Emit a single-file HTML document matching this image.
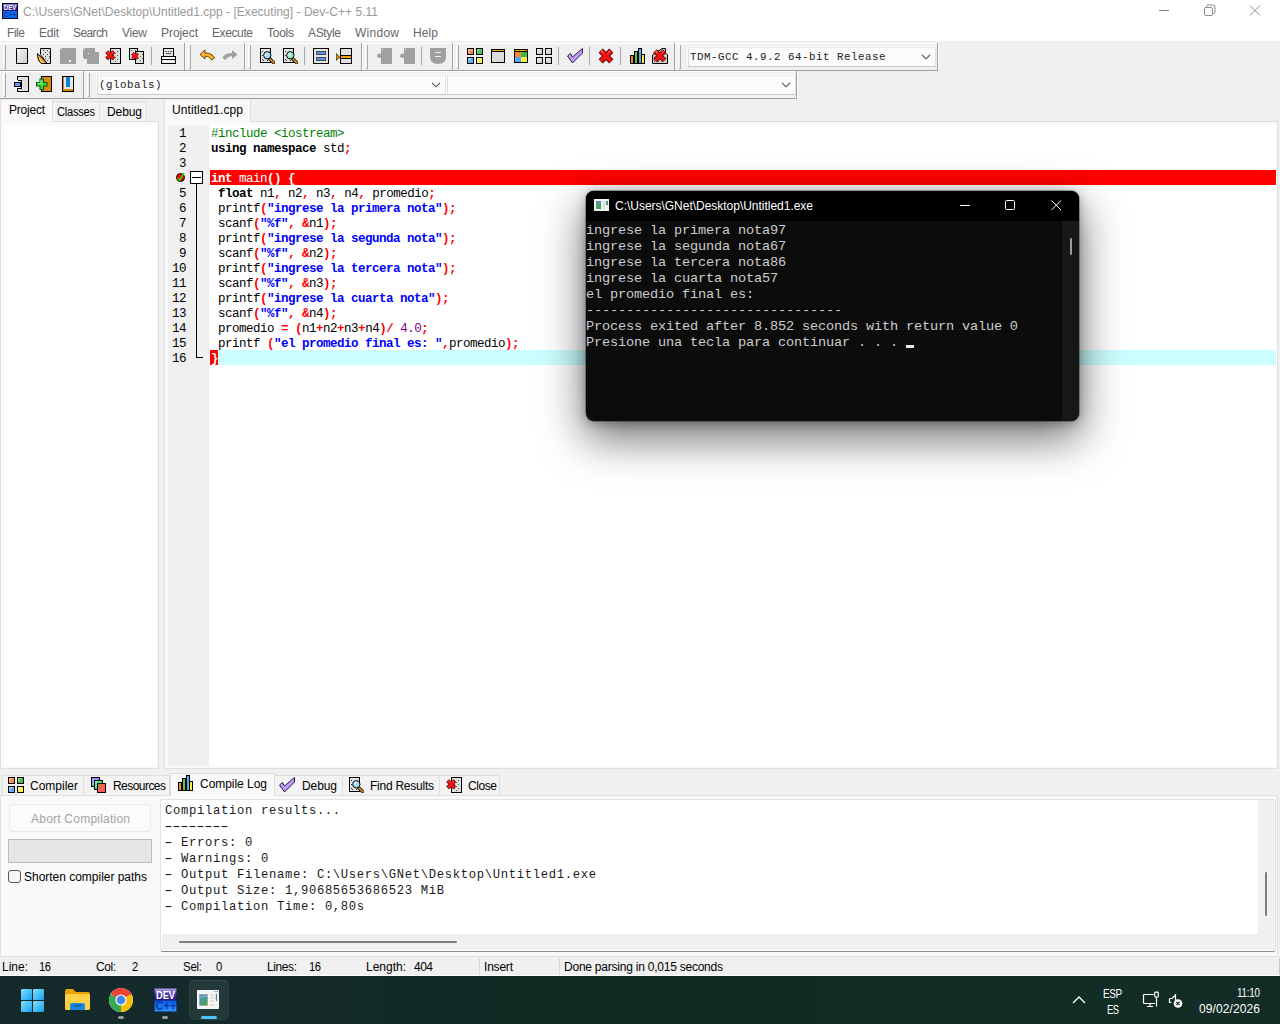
<!DOCTYPE html>
<html lang="es"><head><meta charset="utf-8"><title>Dev-C++</title>
<style>
html,body{margin:0;padding:0}
body{width:1280px;height:1024px;overflow:hidden;background:#f0f0f0;position:relative;font-family:"Liberation Sans",sans-serif}
body div,body svg,body span.t,body pre{position:absolute;box-sizing:border-box}
span.t{white-space:pre;display:block}
pre{margin:0;white-space:pre}
pre b{font-weight:700}
#log i{display:inline-block;font-style:normal;transform:scaleX(1.75)}
b.s{color:#0000ff}b.y{color:#ff0000}b.n{color:#800080;font-weight:400}b.p{color:#008000;font-weight:400}b.w{color:#fff}b.wn{color:#fff;font-weight:400}
</style></head>
<body>
<!-- title bar + menu -->
<div style="left:0px;top:0px;width:1280px;height:41px;background:#ffffff;"></div>
<svg style="left:2px;top:3px;" width="16" height="16" viewBox="0 0 16 16">
<defs><linearGradient id="gda" x1="0" y1="0" x2="0" y2="1"><stop offset="0" stop-color="#8a80d8"/><stop offset="0.500" stop-color="#3a2aa0"/><stop offset="1" stop-color="#1c1470"/></linearGradient></defs>
<rect x="0" y="0" width="16" height="16" fill="#08082c"/>
<rect x="1" y="1" width="14" height="7" fill="url(#gda)"/>
<rect x="1" y="8" width="14" height="7" fill="#0f6af2"/>
<text x="8" y="7.300" font-family="Liberation Sans, sans-serif" font-size="6.500" font-weight="700" fill="#fff" text-anchor="middle" textLength="12.500" lengthAdjust="spacingAndGlyphs">DEV</text>
<text x="8" y="14.300" font-family="Liberation Sans, sans-serif" font-size="8" font-weight="700" fill="#0a3a9c" text-anchor="middle" textLength="13" lengthAdjust="spacingAndGlyphs">C++</text>
</svg>
<span class="t" id="t1" style="left:23px;top:4px;font:400 12px/16px 'Liberation Sans', sans-serif;color:#999999;letter-spacing:0.028px;">C:\Users\GNet\Desktop\Untitled1.cpp - [Executing] - Dev-C++ 5.11</span>
<svg style="left:1140px;top:0px;" width="140" height="24" viewBox="0 0 140 24">
<g fill="none" stroke="#8a8a8a" stroke-width="1">
<path d="M19 10.5h10"/>
<rect x="64.5" y="7.5" width="8" height="8" rx="1.5"/>
<path d="M66.5 7.5v-1a1.5 1.5 0 0 1 1.5 -1.5h5a2 2 0 0 1 2 2v5a1.500 1.500 0 0 1 -1.500 1.500h-1"/>
<path d="M110 5.500l10 10M120 5.500l-10 10"/>
</g></svg>
<span class="t" id="t2" style="left:7px;top:25px;font:400 12px/16px 'Liberation Sans', sans-serif;color:#666666;letter-spacing:-0.448px;">File</span>
<span class="t" id="t3" style="left:39px;top:25px;font:400 12px/16px 'Liberation Sans', sans-serif;color:#666666;letter-spacing:-0.229px;">Edit</span>
<span class="t" id="t4" style="left:73px;top:25px;font:400 12px/16px 'Liberation Sans', sans-serif;color:#666666;letter-spacing:-0.606px;">Search</span>
<span class="t" id="t5" style="left:122px;top:25px;font:400 12px/16px 'Liberation Sans', sans-serif;color:#666666;letter-spacing:-0.266px;">View</span>
<span class="t" id="t6" style="left:161px;top:25px;font:400 12px/16px 'Liberation Sans', sans-serif;color:#666666;letter-spacing:-0.060px;">Project</span>
<span class="t" id="t7" style="left:212px;top:25px;font:400 12px/16px 'Liberation Sans', sans-serif;color:#666666;letter-spacing:-0.393px;">Execute</span>
<span class="t" id="t8" style="left:267px;top:25px;font:400 12px/16px 'Liberation Sans', sans-serif;color:#666666;letter-spacing:-0.254px;">Tools</span>
<span class="t" id="t9" style="left:308px;top:25px;font:400 12px/16px 'Liberation Sans', sans-serif;color:#666666;letter-spacing:-0.338px;">AStyle</span>
<span class="t" id="t10" style="left:355px;top:25px;font:400 12px/16px 'Liberation Sans', sans-serif;color:#666666;letter-spacing:0.263px;">Window</span>
<span class="t" id="t11" style="left:413px;top:25px;font:400 12px/16px 'Liberation Sans', sans-serif;color:#666666;letter-spacing:0.104px;">Help</span>
<!-- toolbars -->
<div style="left:0px;top:43px;width:938px;height:1px;background:#ffffff;"></div>
<div style="left:0px;top:70px;width:938px;height:1px;background:#a0a0a0;"></div>
<div style="left:0px;top:98px;width:797px;height:1px;background:#a0a0a0;"></div>
<div style="left:0px;top:71px;width:797px;height:1px;background:#ffffff;"></div>
<div style="left:5px;top:45px;width:1px;height:24px;background:#a8a8a8;"></div>
<div style="left:4px;top:68px;width:1px;height:1px;background:#a8a8a8;"></div>
<div style="left:3px;top:45px;width:1px;height:23px;background:#ffffff;"></div>
<div style="left:190px;top:45px;width:1px;height:24px;background:#a8a8a8;"></div>
<div style="left:189px;top:68px;width:1px;height:1px;background:#a8a8a8;"></div>
<div style="left:188px;top:45px;width:1px;height:23px;background:#ffffff;"></div>
<div style="left:250px;top:45px;width:1px;height:24px;background:#a8a8a8;"></div>
<div style="left:249px;top:68px;width:1px;height:1px;background:#a8a8a8;"></div>
<div style="left:248px;top:45px;width:1px;height:23px;background:#ffffff;"></div>
<div style="left:367px;top:45px;width:1px;height:24px;background:#a8a8a8;"></div>
<div style="left:366px;top:68px;width:1px;height:1px;background:#a8a8a8;"></div>
<div style="left:365px;top:45px;width:1px;height:23px;background:#ffffff;"></div>
<div style="left:458px;top:45px;width:1px;height:24px;background:#a8a8a8;"></div>
<div style="left:457px;top:68px;width:1px;height:1px;background:#a8a8a8;"></div>
<div style="left:456px;top:45px;width:1px;height:23px;background:#ffffff;"></div>
<div style="left:680px;top:45px;width:1px;height:24px;background:#a8a8a8;"></div>
<div style="left:679px;top:68px;width:1px;height:1px;background:#a8a8a8;"></div>
<div style="left:678px;top:45px;width:1px;height:23px;background:#ffffff;"></div>
<div style="left:184px;top:43px;width:1px;height:27px;background:#a0a0a0;"></div>
<div style="left:185px;top:43px;width:1px;height:27px;background:#fbfbfb;"></div>
<div style="left:244px;top:43px;width:1px;height:27px;background:#a0a0a0;"></div>
<div style="left:245px;top:43px;width:1px;height:27px;background:#fbfbfb;"></div>
<div style="left:361px;top:43px;width:1px;height:27px;background:#a0a0a0;"></div>
<div style="left:362px;top:43px;width:1px;height:27px;background:#fbfbfb;"></div>
<div style="left:452px;top:43px;width:1px;height:27px;background:#a0a0a0;"></div>
<div style="left:453px;top:43px;width:1px;height:27px;background:#fbfbfb;"></div>
<div style="left:674px;top:43px;width:1px;height:27px;background:#a0a0a0;"></div>
<div style="left:675px;top:43px;width:1px;height:27px;background:#fbfbfb;"></div>
<div style="left:937px;top:43px;width:1px;height:27px;background:#a0a0a0;"></div>
<div style="left:938px;top:43px;width:1px;height:27px;background:#fbfbfb;"></div>
<div style="left:151px;top:47px;width:1px;height:18px;background:#a8a8a8;"></div>
<div style="left:304px;top:47px;width:1px;height:18px;background:#a8a8a8;"></div>
<div style="left:421px;top:47px;width:1px;height:18px;background:#a8a8a8;"></div>
<div style="left:558px;top:47px;width:1px;height:18px;background:#a8a8a8;"></div>
<div style="left:589px;top:47px;width:1px;height:18px;background:#a8a8a8;"></div>
<div style="left:620px;top:47px;width:1px;height:18px;background:#a8a8a8;"></div>
<div style="left:5px;top:73px;width:1px;height:24px;background:#a8a8a8;"></div>
<div style="left:4px;top:96px;width:1px;height:1px;background:#a8a8a8;"></div>
<div style="left:3px;top:73px;width:1px;height:23px;background:#ffffff;"></div>
<div style="left:89px;top:73px;width:1px;height:24px;background:#a8a8a8;"></div>
<div style="left:88px;top:96px;width:1px;height:1px;background:#a8a8a8;"></div>
<div style="left:87px;top:73px;width:1px;height:23px;background:#ffffff;"></div>
<div style="left:83px;top:71px;width:1px;height:27px;background:#a0a0a0;"></div>
<div style="left:84px;top:71px;width:1px;height:27px;background:#fbfbfb;"></div>
<div style="left:796px;top:71px;width:1px;height:27px;background:#a0a0a0;"></div>
<div style="left:797px;top:71px;width:1px;height:27px;background:#fbfbfb;"></div>
<svg style="left:13px;top:48px;shape-rendering:crispEdges;" width="16" height="16" viewBox="0 0 16 16"><defs><linearGradient id="gnew" x1="0" y1="0" x2="1" y2="1"><stop offset="0" stop-color="#f2f2f2"/><stop offset="1" stop-color="#cfcfcf"/></linearGradient></defs><rect x="3.500" y="0.500" width="11" height="15" fill="url(#gnew)" stroke="#000"/></svg>
<svg style="left:36px;top:48px;shape-rendering:crispEdges;" width="16" height="16" viewBox="0 0 16 16"><g shape-rendering="geometricPrecision"><path d="M4.500 0.500H14.500V15.500H11L4.500 6.500Z" fill="#e0e0e0" stroke="#000"/></g><rect x="7" y="2" width="1" height="1" fill="#444"/><rect x="11" y="2" width="1" height="1" fill="#444"/><rect x="9" y="4" width="1" height="1" fill="#444"/><rect x="13" y="4" width="1" height="1" fill="#444"/><rect x="7" y="6" width="1" height="1" fill="#444"/><rect x="11" y="6" width="1" height="1" fill="#444"/><rect x="9" y="8" width="1" height="1" fill="#444"/><rect x="13" y="8" width="1" height="1" fill="#444"/><rect x="9" y="10" width="1" height="1" fill="#444"/><rect x="13" y="10" width="1" height="1" fill="#444"/><rect x="11" y="12" width="1" height="1" fill="#444"/><path d="M1.500 5.500L11 15.500H5.500Q1.500 13 1.500 5.500Z" fill="#ffb43c" stroke="#000" stroke-width="1" stroke-linejoin="round" shape-rendering="geometricPrecision"/></svg>
<svg style="left:60px;top:48px;shape-rendering:crispEdges;" width="16" height="16" viewBox="0 0 16 16"><rect x="0" y="0" width="16" height="16" fill="#a0a0a0"/><rect x="0" y="0" width="1" height="1" fill="#f0f0f0"/><rect x="1" y="1" width="1" height="1" fill="#e8e8e8"/><rect x="9" y="12" width="2" height="2" fill="#f4f4f4"/></svg>
<svg style="left:83px;top:48px;shape-rendering:crispEdges;" width="16" height="16" viewBox="0 0 16 16"><rect x="0" y="0" width="12" height="11" fill="#a0a0a0"/><rect x="4" y="4" width="12" height="12" fill="#a0a0a0"/><rect x="0" y="0" width="1" height="1" fill="#f0f0f0"/><rect x="1" y="1" width="1" height="1" fill="#e8e8e8"/><rect x="5" y="5" width="1" height="1" fill="#f4f4f4"/><rect x="0" y="10" width="1" height="1" fill="#f0f0f0"/></svg>
<svg style="left:105px;top:48px;shape-rendering:crispEdges;" width="16" height="16" viewBox="0 0 16 16"><rect x="5.5" y="0.5" width="10" height="15" fill="#e0e0e0" stroke="#000" stroke-width="1"/><rect x="8" y="3" width="1" height="1" fill="#555"/><rect x="12" y="3" width="1" height="1" fill="#555"/><rect x="10" y="5" width="1" height="1" fill="#555"/><rect x="8" y="7" width="1" height="1" fill="#555"/><rect x="12" y="7" width="1" height="1" fill="#555"/><rect x="10" y="9" width="1" height="1" fill="#555"/><rect x="8" y="11" width="1" height="1" fill="#555"/><rect x="12" y="11" width="1" height="1" fill="#555"/><rect x="10" y="13" width="1" height="1" fill="#555"/><g transform="translate(0.5,2.5) scale(0.95)" shape-rendering="geometricPrecision" stroke-linecap="butt"><path d="M1.200 1.200L8.800 8.800M8.800 1.200L1.200 8.800" stroke="#6a0000" stroke-width="4.200"/><path d="M1.500 1.500L8.500 8.500M8.500 1.500L1.500 8.500" stroke="#f41414" stroke-width="2.800"/><path d="M1.800 1.200L3 2.400M7.600 1.600L6.800 2.400" stroke="#ff8a8a" stroke-width="0.900"/></g></svg>
<svg style="left:128px;top:48px;shape-rendering:crispEdges;" width="16" height="16" viewBox="0 0 16 16"><rect x="1.5" y="0.5" width="8" height="11" fill="#e0e0e0" stroke="#000" stroke-width="1"/><rect x="3" y="2" width="1" height="1" fill="#555"/><rect x="7" y="2" width="1" height="1" fill="#555"/><rect x="5" y="4" width="1" height="1" fill="#555"/><rect x="3" y="6" width="1" height="1" fill="#555"/><rect x="7" y="6" width="1" height="1" fill="#555"/><rect x="5" y="8" width="1" height="1" fill="#555"/><rect x="7.5" y="3.5" width="8" height="12" fill="#e0e0e0" stroke="#000" stroke-width="1"/><rect x="10" y="6" width="1" height="1" fill="#555"/><rect x="14" y="6" width="1" height="1" fill="#555"/><rect x="12" y="8" width="1" height="1" fill="#555"/><rect x="10" y="10" width="1" height="1" fill="#555"/><rect x="14" y="10" width="1" height="1" fill="#555"/><rect x="12" y="12" width="1" height="1" fill="#555"/><g transform="translate(3.5,4.5) scale(0.7)" shape-rendering="geometricPrecision" stroke-linecap="butt"><path d="M1.200 1.200L8.800 8.800M8.800 1.200L1.200 8.800" stroke="#6a0000" stroke-width="4.200"/><path d="M1.500 1.500L8.500 8.500M8.500 1.500L1.500 8.500" stroke="#f41414" stroke-width="2.800"/><path d="M1.800 1.200L3 2.400M7.600 1.600L6.800 2.400" stroke="#ff8a8a" stroke-width="0.900"/></g></svg>
<svg style="left:160px;top:48px;shape-rendering:crispEdges;" width="16" height="16" viewBox="0 0 16 16"><rect x="3.500" y="0.500" width="10" height="8" fill="#e4e4e4" stroke="#000"/><rect x="5" y="3" width="2" height="1" fill="#555"/><rect x="8" y="3" width="1" height="1" fill="#555"/><rect x="10" y="3" width="2" height="1" fill="#555"/><rect x="6" y="5" width="5" height="1" fill="#555"/><rect x="1.500" y="8.500" width="14" height="3" fill="#fff" stroke="#000"/><rect x="1.500" y="11.500" width="14" height="4" rx="1" fill="#e8e8e8" stroke="#000"/><rect x="3" y="13" width="11" height="1" fill="#fff"/></svg>
<svg style="left:199px;top:48px;shape-rendering:crispEdges;" width="16" height="16" viewBox="0 0 16 16"><path d="M6 2L1 6.500L6 11V8.200C9 8 11 9.500 12.500 12L15.500 10C14 6.500 10.500 4.800 6 5Z" fill="#ffb428" stroke="#5a3800" stroke-width="0.9" shape-rendering="geometricPrecision" stroke-linejoin="round"/></svg>
<svg style="left:222px;top:48px;shape-rendering:crispEdges;" width="16" height="16" viewBox="0 0 16 16"><path d="M10 2L15.500 6.500L10 11V8.200C7 8 5 9.500 3.500 12L0.500 10C2 6.500 5.500 4.800 10 5Z" fill="#a0a0a0" shape-rendering="geometricPrecision"/></svg>
<svg style="left:259px;top:48px;shape-rendering:crispEdges;" width="16" height="16" viewBox="0 0 16 16"><rect x="1.5" y="0.5" width="10" height="14" fill="#e4e4e4" stroke="#000" stroke-width="1"/><rect x="3" y="3" width="1" height="1" fill="#333"/><rect x="3" y="7" width="1" height="1" fill="#333"/><rect x="3" y="11" width="1" height="1" fill="#333"/><rect x="4" y="12" width="1" height="1" fill="#333"/><rect x="8" y="12" width="1" height="1" fill="#333"/><g shape-rendering="geometricPrecision"><path d="M10.500 10.500L15 15" stroke="#000" stroke-width="3.200" stroke-linecap="round"/><path d="M10.500 10.500L15 15" stroke="#f0a020" stroke-width="1.600" stroke-linecap="round"/><circle cx="8.300" cy="7.300" r="3.700" fill="#9adcf4" stroke="#000" stroke-width="1"/><circle cx="7.300" cy="6.300" r="1.500" fill="#fff" opacity=".55"/></g></svg>
<svg style="left:282px;top:48px;shape-rendering:crispEdges;" width="16" height="16" viewBox="0 0 16 16"><rect x="1.5" y="0.5" width="10" height="14" fill="#e4e4e4" stroke="#000" stroke-width="1"/><rect x="3" y="3" width="1" height="1" fill="#333"/><rect x="3" y="7" width="1" height="1" fill="#333"/><rect x="3" y="11" width="1" height="1" fill="#333"/><rect x="4" y="12" width="1" height="1" fill="#333"/><rect x="8" y="12" width="1" height="1" fill="#333"/><g shape-rendering="geometricPrecision"><path d="M10.500 10.500L15 15" stroke="#000" stroke-width="3.200" stroke-linecap="round"/><path d="M10.500 10.500L15 15" stroke="#f0a020" stroke-width="1.600" stroke-linecap="round"/><circle cx="8.300" cy="7.300" r="3.700" fill="#9aeac0" stroke="#000" stroke-width="1"/><circle cx="7.300" cy="6.300" r="1.500" fill="#fff" opacity=".55"/></g></svg>
<svg style="left:313px;top:48px;shape-rendering:crispEdges;" width="16" height="16" viewBox="0 0 16 16"><rect x="0.500" y="0.500" width="15" height="15" fill="#e4e4e4" stroke="#000"/><rect x="3.500" y="3.500" width="9" height="3" fill="#4f8ff7" stroke="#4a4a4a"/><rect x="3.500" y="9.500" width="9" height="3" fill="#4f8ff7" stroke="#4a4a4a"/></svg>
<svg style="left:336px;top:48px;shape-rendering:crispEdges;" width="16" height="16" viewBox="0 0 16 16"><rect x="4.500" y="0.500" width="11" height="15" fill="#e0e0e0" stroke="#000"/><rect x="5" y="7" width="10" height="1" fill="#000"/><rect x="5" y="8" width="10" height="2" fill="#f5a000"/><rect x="5" y="10" width="10" height="1" fill="#000"/><path d="M0 5.500L3.500 9L0 12.500Z" fill="#f5a000" stroke="#000" stroke-width="0.8" shape-rendering="geometricPrecision"/></svg>
<svg style="left:376px;top:48px;shape-rendering:crispEdges;" width="16" height="16" viewBox="0 0 16 16"><path d="M5 0H16V16H5V10L2 9.500Q0 8 2 6L5 5.500Z" fill="#a0a0a0" shape-rendering="geometricPrecision"/><rect x="6" y="1" width="1" height="1" fill="#f0f0f0"/></svg>
<svg style="left:399px;top:48px;shape-rendering:crispEdges;" width="16" height="16" viewBox="0 0 16 16"><path d="M5 0H16V16H5V10L2 9.500Q0 8 2 6L5 5.500Z" fill="#a0a0a0" shape-rendering="geometricPrecision"/><rect x="6" y="1" width="1" height="1" fill="#f0f0f0"/></svg>
<svg style="left:430px;top:48px;shape-rendering:crispEdges;" width="16" height="16" viewBox="0 0 16 16"><path d="M0 0H16V9Q16 16 8 16Q0 16 0 9Z" fill="#a0a0a0" shape-rendering="geometricPrecision"/><rect x="5" y="4" width="6" height="1" fill="#f0f0f0"/><rect x="5" y="8" width="6" height="1" fill="#f0f0f0"/></svg>
<svg style="left:467px;top:48px;shape-rendering:crispEdges;" width="16" height="16" viewBox="0 0 16 16"><defs><linearGradient id="q19" x1="0" y1="0" x2="1" y2="1"><stop offset="0" stop-color="#fff" stop-opacity="0.550"/><stop offset="0.600" stop-color="#fff" stop-opacity="0"/></linearGradient></defs><rect x="0.5" y="0.5" width="6" height="6" fill="#fa8a44" stroke="#000"/><rect x="1" y="1" width="5" height="5" fill="url(#q19)"/><rect x="9.5" y="0.5" width="6" height="6" fill="#48c048" stroke="#000"/><rect x="10" y="1" width="5" height="5" fill="url(#q19)"/><rect x="0.5" y="9.5" width="6" height="6" fill="#60acf8" stroke="#000"/><rect x="1" y="10" width="5" height="5" fill="url(#q19)"/><rect x="9.5" y="9.5" width="6" height="6" fill="#f8f248" stroke="#000"/><rect x="10" y="10" width="5" height="5" fill="url(#q19)"/></svg>
<svg style="left:490px;top:48px;shape-rendering:crispEdges;" width="16" height="16" viewBox="0 0 16 16"><rect x="1.500" y="1.500" width="13" height="13" fill="#dcdcdc" stroke="#000"/><rect x="2" y="2" width="12" height="1" fill="#f5a000"/><rect x="2" y="3" width="12" height="1" fill="#000"/></svg>
<svg style="left:513px;top:48px;shape-rendering:crispEdges;" width="16" height="16" viewBox="0 0 16 16"><rect x="1.500" y="1.500" width="13" height="13" fill="#dcdcdc" stroke="#000"/><rect x="2" y="2" width="12" height="1" fill="#f5a000"/><rect x="2" y="3" width="12" height="1" fill="#000"/><rect x="2" y="4" width="6" height="5" fill="#f98538"/><rect x="8" y="4" width="6" height="5" fill="#3cb83c"/><rect x="2" y="9" width="6" height="5" fill="#58a8f8"/><rect x="8" y="9" width="6" height="5" fill="#f6f03c"/></svg>
<svg style="left:536px;top:48px;shape-rendering:crispEdges;" width="16" height="16" viewBox="0 0 16 16"><defs><linearGradient id="q22" x1="0" y1="0" x2="1" y2="1"><stop offset="0" stop-color="#fff" stop-opacity="0.550"/><stop offset="0.600" stop-color="#fff" stop-opacity="0"/></linearGradient></defs><rect x="0.5" y="0.5" width="6" height="6" fill="#d8d8d8" stroke="#000"/><rect x="1" y="1" width="5" height="5" fill="url(#q22)"/><rect x="9.5" y="0.5" width="6" height="6" fill="#d8d8d8" stroke="#000"/><rect x="10" y="1" width="5" height="5" fill="url(#q22)"/><rect x="0.5" y="9.5" width="6" height="6" fill="#d8d8d8" stroke="#000"/><rect x="1" y="10" width="5" height="5" fill="url(#q22)"/><rect x="9.5" y="9.5" width="6" height="6" fill="#d8d8d8" stroke="#000"/><rect x="10" y="10" width="5" height="5" fill="url(#q22)"/></svg>
<svg style="left:567px;top:48px;shape-rendering:crispEdges;" width="16" height="16" viewBox="0 0 16 16"><path d="M0.500 8L5.500 15L15.500 5V0.500L5.500 9L3.500 5.500Z" fill="#c39cf6" stroke="#2a1a50" stroke-width="1" stroke-linejoin="round" shape-rendering="geometricPrecision"/></svg>
<svg style="left:598px;top:48px;shape-rendering:crispEdges;" width="16" height="16" viewBox="0 0 16 16"><g transform="translate(1,1) scale(1.4)" shape-rendering="geometricPrecision" stroke-linecap="butt"><path d="M1.200 1.200L8.800 8.800M8.800 1.200L1.200 8.800" stroke="#6a0000" stroke-width="4.200"/><path d="M1.500 1.500L8.500 8.500M8.500 1.500L1.500 8.500" stroke="#f41414" stroke-width="2.800"/><path d="M1.800 1.200L3 2.400M7.600 1.600L6.800 2.400" stroke="#ff8a8a" stroke-width="0.900"/></g></svg>
<svg style="left:629px;top:48px;shape-rendering:crispEdges;" width="16" height="16" viewBox="0 0 16 16"><rect x="1.500" y="7.500" width="3" height="8" fill="#f98538" stroke="#000"/><rect x="5.500" y="3.500" width="3" height="12" fill="#58c83c" stroke="#000"/><rect x="9.500" y="0.500" width="3" height="15" fill="#58a8f8" stroke="#000"/><rect x="12.500" y="6.500" width="3" height="9" fill="#f6f03c" stroke="#000"/></svg>
<svg style="left:652px;top:48px;shape-rendering:crispEdges;" width="16" height="16" viewBox="0 0 16 16"><path d="M0.500 15.500V7L10 0.500H13.500V5L15.500 7V15.500Z" fill="#d0d0d0" stroke="#000" shape-rendering="geometricPrecision"/><rect x="2" y="9" width="1" height="1" fill="#333"/><rect x="6" y="9" width="1" height="1" fill="#333"/><rect x="10" y="9" width="1" height="1" fill="#333"/><rect x="4" y="11" width="1" height="1" fill="#333"/><rect x="8" y="11" width="1" height="1" fill="#333"/><rect x="12" y="11" width="1" height="1" fill="#333"/><rect x="2" y="13" width="1" height="1" fill="#333"/><rect x="6" y="13" width="1" height="1" fill="#333"/><rect x="10" y="13" width="1" height="1" fill="#333"/><g transform="translate(1.5,1.5) scale(1.25)" shape-rendering="geometricPrecision" stroke-linecap="butt"><path d="M1.200 1.200L8.800 8.800M8.800 1.200L1.200 8.800" stroke="#6a0000" stroke-width="4.200"/><path d="M1.500 1.500L8.500 8.500M8.500 1.500L1.500 8.500" stroke="#f41414" stroke-width="2.800"/><path d="M1.800 1.200L3 2.400M7.600 1.600L6.800 2.400" stroke="#ff8a8a" stroke-width="0.900"/></g></svg>
<svg style="left:13px;top:76px;shape-rendering:crispEdges;" width="16" height="16" viewBox="0 0 16 16"><rect x="4.500" y="0.500" width="11" height="15" fill="#e0e0e0" stroke="#000"/><rect x="4" y="4" width="5" height="8" fill="#f0f0f0"/><rect x="8" y="3.500" width="1" height="9" fill="#000"/><rect x="5" y="3.500" width="3" height="1" fill="#000"/><rect x="5" y="11.500" width="3" height="1" fill="#000"/><rect x="1.500" y="6.500" width="6" height="4" fill="#5f9df7" stroke="#000"/></svg>
<svg style="left:36px;top:76px;shape-rendering:crispEdges;" width="16" height="16" viewBox="0 0 16 16"><rect x="5.500" y="0.500" width="10" height="15" fill="#d88a10" stroke="#000"/><g shape-rendering="geometricPrecision"><path d="M4 3H7.500V6.500H11V10H7.500V13.500H4V10H0.500V6.500H4Z" fill="#3fe03f" stroke="#0a5a0a" stroke-width="1.100" stroke-linejoin="round"/><path d="M5 4.200V7.500H1.800" fill="none" stroke="#b8ffb8" stroke-width="0.900"/></g></svg>
<svg style="left:59px;top:76px;shape-rendering:crispEdges;" width="16" height="16" viewBox="0 0 16 16"><rect x="3.500" y="0.500" width="11" height="15" fill="#d88a10" stroke="#000"/><rect x="4.500" y="1" width="9" height="12" fill="#e8e8e8"/><rect x="7" y="1" width="4" height="10" fill="#1080d0"/></svg>
<div style="left:687px;top:46px;width:249px;height:21px;background:#fbfbfb;border:1px solid #fdfdfd;border-right-color:#e2e2e2;border-bottom-color:#c6c9c6;box-shadow:inset 1px 0 0 #dedede,inset 0 1px 0 #ececec;"></div>
<svg style="left:921px;top:54px;" width="10" height="6" viewBox="0 0 10 6"><path d="M1 0.800l4 4l4 -4" fill="none" stroke="#505050" stroke-width="1.100"/></svg>
<span class="t" id="t12" style="left:690px;top:50px;font:400 10.8px/14px 'Liberation Mono', monospace;color:#222;letter-spacing:0.52px;">TDM-GCC 4.9.2 64-bit Release</span>
<div style="left:96px;top:74px;width:350px;height:21px;background:#fbfbfb;border:1px solid #fdfdfd;border-right-color:#e2e2e2;border-bottom-color:#c6c9c6;box-shadow:inset 1px 0 0 #dedede,inset 0 1px 0 #ececec;"></div>
<svg style="left:431px;top:82px;" width="10" height="6" viewBox="0 0 10 6"><path d="M1 0.800l4 4l4 -4" fill="none" stroke="#505050" stroke-width="1.100"/></svg>
<span class="t" id="t13" style="left:99px;top:78px;font:400 10.8px/14px 'Liberation Mono', monospace;color:#222;letter-spacing:0.52px;">(globals)</span>
<div style="left:446px;top:74px;width:350px;height:21px;background:#fbfbfb;border:1px solid #fdfdfd;border-right-color:#e2e2e2;border-bottom-color:#c6c9c6;box-shadow:inset 1px 0 0 #dedede,inset 0 1px 0 #ececec;"></div>
<svg style="left:781px;top:82px;" width="10" height="6" viewBox="0 0 10 6"><path d="M1 0.800l4 4l4 -4" fill="none" stroke="#505050" stroke-width="1.100"/></svg>
<!-- left project browser -->
<div style="left:52px;top:101px;width:48px;height:21px;background:#f3f3f3;border:1px solid #dfdfdf;"></div>
<div style="left:99px;top:101px;width:48px;height:21px;background:#f3f3f3;border:1px solid #dfdfdf;"></div>
<div style="left:0px;top:121px;width:159px;height:648px;background:#f9f9f9;border:1px solid #dfdfdf;"></div>
<div style="left:0px;top:99px;width:53px;height:23px;background:#f9f9f9;border:1px solid #ececec;border-bottom:none;border-right-color:#dfdfdf;border-left-color:#dfdfdf;"></div>
<div style="left:4px;top:125px;width:153px;height:641px;background:#ffffff;"></div>
<span class="t" id="t14" style="left:9px;top:102px;font:400 12px/16px 'Liberation Sans', sans-serif;color:#000;letter-spacing:-0.227px;">Project</span>
<span class="t" id="t15" style="left:57px;top:104px;font:400 12px/16px 'Liberation Sans', sans-serif;color:#000;letter-spacing:-0.285px;transform:scaleX(0.9273);transform-origin:left center;">Classes</span>
<span class="t" id="t16" style="left:107px;top:104px;font:400 12px/16px 'Liberation Sans', sans-serif;color:#000;letter-spacing:-0.094px;">Debug</span>
<!-- editor -->
<div style="left:164px;top:121px;width:1114px;height:648px;background:#f9f9f9;border:1px solid #dfdfdf;"></div>
<div style="left:164px;top:99px;width:87px;height:23px;background:#f9f9f9;border:1px solid #ececec;border-bottom:none;border-left-color:#dfdfdf;border-right-color:#dfdfdf;"></div>
<span class="t" id="t17" style="left:172px;top:102px;font:400 12px/16px 'Liberation Sans', sans-serif;color:#000;letter-spacing:0.079px;">Untitled1.cpp</span>
<div style="left:168px;top:125px;width:1109px;height:641px;background:#ffffff;"></div>
<div style="left:168px;top:125px;width:41px;height:641px;background:#f0f0f0;"></div>
<div style="left:210px;top:170px;width:1066px;height:15px;background:#ff0000;"></div>
<div style="left:210px;top:350px;width:1066px;height:15px;background:#ccffff;"></div>
<div style="left:210px;top:350px;width:8px;height:15px;background:#ff0000;"></div>
<div style="left:190px;top:171px;width:13px;height:13px;background:#ffffff;border:1px solid #000;"></div>
<div style="left:192px;top:177px;width:9px;height:1px;background:#000;"></div>
<div style="left:196px;top:184px;width:1px;height:174px;background:#000;"></div>
<div style="left:196px;top:357px;width:7px;height:1px;background:#000;"></div>
<svg style="left:176px;top:172px;" width="10" height="11" viewBox="0 0 10 11"><circle cx="4.500" cy="5.500" r="4" fill="#ff0000" stroke="#000" stroke-width="1"/><path d="M1.500 6.300L3.500 8.300L8 1.200" fill="none" stroke="#00ee00" stroke-width="1.500"/></svg>
<pre id="code" style="left:211px;top:127px;font:12.5px/15px 'Liberation Mono', monospace;letter-spacing:-0.5px;color:#000;"><b class="p">#include &lt;iostream&gt;</b>
<b class="k">using namespace</b> std<b class="y">;</b>

<b class="w">int</b><b class="wn"> main</b><b class="w">() {</b>
 <b class="k">float</b> n1<b class="y">,</b> n2<b class="y">,</b> n3<b class="y">,</b> n4<b class="y">,</b> promedio<b class="y">;</b>
 printf<b class="y">(</b><b class="s">&quot;ingrese la primera nota&quot;</b><b class="y">);</b>
 scanf<b class="y">(</b><b class="s">&quot;%f&quot;</b><b class="y">, &amp;</b>n1<b class="y">);</b>
 printf<b class="y">(</b><b class="s">&quot;ingrese la segunda nota&quot;</b><b class="y">);</b>
 scanf<b class="y">(</b><b class="s">&quot;%f&quot;</b><b class="y">, &amp;</b>n2<b class="y">);</b>
 printf<b class="y">(</b><b class="s">&quot;ingrese la tercera nota&quot;</b><b class="y">);</b>
 scanf<b class="y">(</b><b class="s">&quot;%f&quot;</b><b class="y">, &amp;</b>n3<b class="y">);</b>
 printf<b class="y">(</b><b class="s">&quot;ingrese la cuarta nota&quot;</b><b class="y">);</b>
 scanf<b class="y">(</b><b class="s">&quot;%f&quot;</b><b class="y">, &amp;</b>n4<b class="y">);</b>
 promedio <b class="y">= (</b>n1<b class="y">+</b>n2<b class="y">+</b>n3<b class="y">+</b>n4<b class="y">)/</b> <b class="n">4.0</b><b class="y">;</b>
 printf <b class="y">(</b><b class="s">&quot;el promedio final es: &quot;</b><b class="y">,</b>promedio<b class="y">);</b>
<b class="w">}</b></pre>
<pre id="lnum" style="left:168px;top:127px;width:18px;text-align:right;font:12.5px/15px 'Liberation Mono', monospace;letter-spacing:-0.5px;color:#000;">1
2
3
 
5
6
7
8
9
10
11
12
13
14
15
16</pre>
<!-- bottom message panel -->
<div style="left:2px;top:775px;width:82px;height:21px;background:#f3f3f3;border:1px solid #dfdfdf;border-bottom:none;"></div>
<div style="left:84px;top:775px;width:86px;height:21px;background:#f3f3f3;border:1px solid #dfdfdf;border-bottom:none;border-left:none;"></div>
<div style="left:275px;top:775px;width:68px;height:21px;background:#f3f3f3;border:1px solid #dfdfdf;border-bottom:none;border-left:none;"></div>
<div style="left:343px;top:775px;width:97px;height:21px;background:#f3f3f3;border:1px solid #dfdfdf;border-bottom:none;border-left:none;"></div>
<div style="left:440px;top:775px;width:60px;height:21px;background:#f3f3f3;border:1px solid #dfdfdf;border-bottom:none;border-left:none;"></div>
<div style="left:0px;top:795px;width:1278px;height:162px;background:#f9f9f9;border:1px solid #dfdfdf;"></div>
<div style="left:170px;top:773px;width:105px;height:23px;background:#f9f9f9;border:1px solid #dfdfdf;border-bottom:none;"></div>
<span class="t" id="t18" style="left:30px;top:778px;font:400 12px/16px 'Liberation Sans', sans-serif;color:#000;letter-spacing:-0.002px;">Compiler</span>
<span class="t" id="t19" style="left:113px;top:778px;font:400 12px/16px 'Liberation Sans', sans-serif;color:#000;letter-spacing:-0.545px;">Resources</span>
<span class="t" id="t20" style="left:200px;top:776px;font:400 12px/16px 'Liberation Sans', sans-serif;color:#000;letter-spacing:-0.037px;">Compile Log</span>
<span class="t" id="t21" style="left:302px;top:778px;font:400 12px/16px 'Liberation Sans', sans-serif;color:#000;letter-spacing:-0.094px;">Debug</span>
<span class="t" id="t22" style="left:370px;top:778px;font:400 12px/16px 'Liberation Sans', sans-serif;color:#000;letter-spacing:-0.246px;">Find Results</span>
<span class="t" id="t23" style="left:468px;top:778px;font:400 12px/16px 'Liberation Sans', sans-serif;color:#000;letter-spacing:-0.422px;">Close</span>
<svg style="left:8px;top:777px;shape-rendering:crispEdges;" width="16" height="16" viewBox="0 0 16 16"><defs><linearGradient id="q34" x1="0" y1="0" x2="1" y2="1"><stop offset="0" stop-color="#fff" stop-opacity="0.550"/><stop offset="0.600" stop-color="#fff" stop-opacity="0"/></linearGradient></defs><rect x="0.5" y="0.5" width="6" height="6" fill="#fa8a44" stroke="#000"/><rect x="1" y="1" width="5" height="5" fill="url(#q34)"/><rect x="9.5" y="0.5" width="6" height="6" fill="#48c048" stroke="#000"/><rect x="10" y="1" width="5" height="5" fill="url(#q34)"/><rect x="0.5" y="9.5" width="6" height="6" fill="#60acf8" stroke="#000"/><rect x="1" y="10" width="5" height="5" fill="url(#q34)"/><rect x="9.5" y="9.5" width="6" height="6" fill="#f8f248" stroke="#000"/><rect x="10" y="10" width="5" height="5" fill="url(#q34)"/></svg>
<svg style="left:91px;top:777px;shape-rendering:crispEdges;" width="15" height="16" viewBox="0 0 15 16"><rect x="0.500" y="0.500" width="8" height="9" fill="#8c8cff" stroke="#000"/><rect x="3.500" y="3.500" width="8" height="9" fill="#44e888" stroke="#000"/><rect x="6.500" y="6.500" width="8" height="9" fill="#ff5c5c" stroke="#000"/><rect x="7" y="7" width="4" height="5" fill="#d87038"/><rect x="4" y="4" width="2" height="3" fill="#8cf0b8" opacity="0.600"/><rect x="1" y="1" width="2" height="8" fill="#b0b0ff" opacity="0.600"/></svg>
<svg style="left:177px;top:775px;shape-rendering:crispEdges;" width="16" height="16" viewBox="0 0 16 16"><rect x="1.500" y="7.500" width="3" height="8" fill="#f98538" stroke="#000"/><rect x="5.500" y="3.500" width="3" height="12" fill="#58c83c" stroke="#000"/><rect x="9.500" y="0.500" width="3" height="15" fill="#58a8f8" stroke="#000"/><rect x="12.500" y="6.500" width="3" height="9" fill="#f6f03c" stroke="#000"/></svg>
<svg style="left:279px;top:777px;" width="16" height="16" viewBox="0 0 16 16"><path d="M0.500 8L5.500 15L15.500 5V0.500L5.500 9L3.500 5.500Z" fill="#c39cf6" stroke="#2a1a50" stroke-width="1" stroke-linejoin="round" shape-rendering="geometricPrecision"/></svg>
<svg style="left:348px;top:777px;shape-rendering:crispEdges;" width="16" height="16" viewBox="0 0 16 16"><rect x="1.5" y="0.5" width="10" height="14" fill="#e4e4e4" stroke="#000" stroke-width="1"/><rect x="3" y="3" width="1" height="1" fill="#333"/><rect x="3" y="7" width="1" height="1" fill="#333"/><rect x="3" y="11" width="1" height="1" fill="#333"/><rect x="4" y="12" width="1" height="1" fill="#333"/><rect x="8" y="12" width="1" height="1" fill="#333"/><g shape-rendering="geometricPrecision"><path d="M10.500 10.500L15 15" stroke="#000" stroke-width="3.200" stroke-linecap="round"/><path d="M10.500 10.500L15 15" stroke="#f0a020" stroke-width="1.600" stroke-linecap="round"/><circle cx="8.300" cy="7.300" r="3.700" fill="#9adcf4" stroke="#000" stroke-width="1"/><circle cx="7.300" cy="6.300" r="1.500" fill="#fff" opacity=".55"/></g></svg>
<svg style="left:446px;top:777px;shape-rendering:crispEdges;" width="16" height="16" viewBox="0 0 16 16"><rect x="5.5" y="0.5" width="10" height="15" fill="#e0e0e0" stroke="#000" stroke-width="1"/><rect x="8" y="3" width="1" height="1" fill="#555"/><rect x="12" y="3" width="1" height="1" fill="#555"/><rect x="10" y="5" width="1" height="1" fill="#555"/><rect x="8" y="7" width="1" height="1" fill="#555"/><rect x="12" y="7" width="1" height="1" fill="#555"/><rect x="10" y="9" width="1" height="1" fill="#555"/><rect x="8" y="11" width="1" height="1" fill="#555"/><rect x="12" y="11" width="1" height="1" fill="#555"/><rect x="10" y="13" width="1" height="1" fill="#555"/><g transform="translate(0.5,2.5) scale(0.95)" shape-rendering="geometricPrecision" stroke-linecap="butt"><path d="M1.200 1.200L8.800 8.800M8.800 1.200L1.200 8.800" stroke="#6a0000" stroke-width="4.200"/><path d="M1.500 1.500L8.500 8.500M8.500 1.500L1.500 8.500" stroke="#f41414" stroke-width="2.800"/><path d="M1.800 1.200L3 2.400M7.600 1.600L6.800 2.400" stroke="#ff8a8a" stroke-width="0.900"/></g></svg>
<div style="left:9px;top:804px;width:142px;height:28px;background:#fbfbfb;border:1px solid #e9e9e9;border-radius:4px;"></div>
<span class="t" id="t24" style="left:31px;top:811px;font:400 12px/16px 'Liberation Sans', sans-serif;color:#a3a3a3;letter-spacing:0.226px;">Abort Compilation</span>
<div style="left:8px;top:839px;width:144px;height:24px;background:#e6e6e6;border:1px solid #bcbcbc;"></div>
<div style="left:8px;top:870px;width:13px;height:13px;background:#f6f6f6;border:1px solid #555;border-radius:3px;"></div>
<span class="t" id="t25" style="left:24px;top:869px;font:400 12px/16px 'Liberation Sans', sans-serif;color:#000;letter-spacing:-0.019px;">Shorten compiler paths</span>
<div style="left:160px;top:799px;width:1116px;height:153px;background:#ffffff;border:1px solid #e3e3e3;border-bottom-color:#8a8a8a;border-radius:3px;"></div>
<div style="left:162px;top:934px;width:1112px;height:16px;background:#f0f0f0;"></div>
<div style="left:1258px;top:800px;width:17px;height:150px;background:#f0f0f0;"></div>
<div style="left:179px;top:941px;width:278px;height:2px;background:#7f7f7f;border-radius:1px;"></div>
<div style="left:1265px;top:872px;width:2px;height:44px;background:#7f7f7f;border-radius:1px;"></div>
<pre id="log" style="left:165px;top:803px;font:12.2px/16px 'Liberation Mono', monospace;letter-spacing:0.68px;color:#1a1a1a;">Compilation results...
<i>-</i><i>-</i><i>-</i><i>-</i><i>-</i><i>-</i><i>-</i><i>-</i>
<i>-</i> Errors: 0
<i>-</i> Warnings: 0
<i>-</i> Output Filename: C:\Users\GNet\Desktop\Untitled1.exe
<i>-</i> Output Size: 1,90685653686523 MiB
<i>-</i> Compilation Time: 0,80s</pre>
<!-- status bar -->
<div style="left:0px;top:957px;width:1280px;height:19px;background:#f0f0f0;"></div>
<div style="left:0px;top:975px;width:1280px;height:1px;background:#ffffff;"></div>
<div style="left:1279px;top:958px;width:1px;height:17px;background:#c8c8c8;"></div>
<div style="left:479px;top:958px;width:1px;height:17px;background:#d7d7d7;"></div>
<div style="left:559px;top:958px;width:1px;height:17px;background:#d7d7d7;"></div>
<span class="t" id="t26" style="left:2px;top:959px;font:400 12px/16px 'Liberation Sans', sans-serif;color:#000;letter-spacing:-0.008px;">Line:</span>
<span class="t" id="t27" style="left:39px;top:959px;font:400 12px/16px 'Liberation Sans', sans-serif;color:#000;letter-spacing:-0.534px;transform:scaleX(0.9357);transform-origin:left center;">16</span>
<span class="t" id="t28" style="left:96px;top:959px;font:400 12px/16px 'Liberation Sans', sans-serif;color:#000;letter-spacing:-0.448px;">Col:</span>
<span class="t" id="t29" style="left:132px;top:959px;font:400 12px/16px 'Liberation Sans', sans-serif;color:#000;letter-spacing:-0.268px;transform:scaleX(0.9346);transform-origin:left center;">2</span>
<span class="t" id="t30" style="left:183px;top:959px;font:400 12px/16px 'Liberation Sans', sans-serif;color:#000;letter-spacing:-0.276px;transform:scaleX(0.9567);transform-origin:left center;">Sel:</span>
<span class="t" id="t31" style="left:216px;top:959px;font:400 12px/16px 'Liberation Sans', sans-serif;color:#000;letter-spacing:-0.268px;transform:scaleX(0.9346);transform-origin:left center;">0</span>
<span class="t" id="t32" style="left:267px;top:959px;font:400 12px/16px 'Liberation Sans', sans-serif;color:#000;letter-spacing:-0.406px;">Lines:</span>
<span class="t" id="t33" style="left:309px;top:959px;font:400 12px/16px 'Liberation Sans', sans-serif;color:#000;letter-spacing:-0.534px;transform:scaleX(0.9357);transform-origin:left center;">16</span>
<span class="t" id="t34" style="left:366px;top:959px;font:400 12px/16px 'Liberation Sans', sans-serif;color:#000;letter-spacing:-0.008px;">Length:</span>
<span class="t" id="t35" style="left:414px;top:959px;font:400 12px/16px 'Liberation Sans', sans-serif;color:#000;letter-spacing:-0.516px;">404</span>
<span class="t" id="t36" style="left:484px;top:959px;font:400 12px/16px 'Liberation Sans', sans-serif;color:#000;letter-spacing:-0.203px;">Insert</span>
<span class="t" id="t37" style="left:564px;top:959px;font:400 12px/16px 'Liberation Sans', sans-serif;color:#000;letter-spacing:-0.230px;">Done parsing in 0,015 seconds</span>
<!-- taskbar -->
<div style="left:0px;top:976px;width:1280px;height:48px;background:linear-gradient(90deg,#15292b 0%,#142a2a 20%,#0f2a21 50%,#122d25 80%,#132d26 100%);"></div>
<svg style="left:21px;top:989px;" width="23" height="23" viewBox="0 0 23 23"><defs><linearGradient id="gst" x1="0" y1="0" x2="1" y2="1"><stop offset="0" stop-color="#7fe0ff"/><stop offset="1" stop-color="#1aa0f0"/></linearGradient></defs><g fill="url(#gst)"><rect x="0" y="0" width="11" height="11" rx="1"/><rect x="12" y="0" width="11" height="11" rx="1"/><rect x="0" y="12" width="11" height="11" rx="1"/><rect x="12" y="12" width="11" height="11" rx="1"/></g></svg>
<svg style="left:65px;top:988px;" width="25" height="23" viewBox="0 0 25 23"><path d="M0 3a2 2 0 0 1 2 -2h6l3 3h12a2 2 0 0 1 2 2v14a2 2 0 0 1 -2 2h-21a2 2 0 0 1 -2 -2z" fill="#e8a300"/><path d="M0 8a2 2 0 0 1 2 -2h21a2 2 0 0 1 2 2v12a2 2 0 0 1 -2 2h-21a2 2 0 0 1 -2 -2z" fill="#ffd045"/><path d="M5 22v-5a2 2 0 0 1 2 -2h11a2 2 0 0 1 2 2v5z" fill="#1a8ae0"/><rect x="8" y="17" width="9" height="1.500" rx="0.700" fill="#0b5fa8"/></svg>
<svg style="left:109px;top:988px;" width="24" height="24" viewBox="0 0 24 24"><circle cx="12" cy="12" r="12" fill="#fff"/><path d="M12 12L1.610 6A12 12 0 0 1 22.390 6Z" fill="#ea4335"/><path d="M12 12L22.390 6A12 12 0 0 1 12 24Z" fill="#fbbc04"/><path d="M12 12L12 24A12 12 0 0 1 1.610 6Z" fill="#34a853"/><path d="M12 6.500h10.200" stroke="#ea4335" stroke-width="1"/><circle cx="12" cy="12" r="5.600" fill="#fff"/><circle cx="12" cy="12" r="4.400" fill="#4285f4"/></svg>
<svg style="left:154px;top:988px;" width="23" height="24" viewBox="0 0 23 24"><defs><linearGradient id="gdv1" x1="0" y1="0" x2="0" y2="1"><stop offset="0" stop-color="#b4acea"/><stop offset="0.45" stop-color="#4a3ab0"/><stop offset="1" stop-color="#1c1470"/></linearGradient>
<linearGradient id="gdv2" x1="0" y1="0" x2="0" y2="1"><stop offset="0" stop-color="#0a5ae8"/><stop offset="1" stop-color="#2a96ff"/></linearGradient></defs>
<rect width="23" height="24" fill="#0c0c40"/><rect x="0.500" y="0.500" width="22" height="12" fill="url(#gdv1)"/><rect x="0.500" y="12.500" width="22" height="11" fill="url(#gdv2)"/>
<text x="11.500" y="11" font-family="Liberation Sans, sans-serif" font-size="10" font-weight="700" fill="#fff" text-anchor="middle" textLength="19" lengthAdjust="spacingAndGlyphs">DEV</text>
<text x="12" y="21.500" font-family="Liberation Sans, sans-serif" font-size="12" font-weight="700" fill="#0a3a9c" text-anchor="middle" textLength="21" lengthAdjust="spacingAndGlyphs">C++</text></svg>
<div style="left:189px;top:980px;width:40px;height:40px;background:rgba(255,255,255,0.07);border-radius:5px;border:1px solid rgba(255,255,255,0.035);border-top-color:rgba(255,255,255,0.09);"></div>
<svg style="left:197px;top:990px;" width="22" height="19" viewBox="0 0 22 19"><defs><linearGradient id="gcon" x1="0" y1="0" x2="0.600" y2="1"><stop offset="0" stop-color="#5a86c8"/><stop offset="0.500" stop-color="#3f9a96"/><stop offset="1" stop-color="#48a848"/></linearGradient></defs><rect width="22" height="19" rx="0.800" fill="#f4f4f4"/><rect x="2.500" y="4.500" width="8" height="11" fill="url(#gcon)" stroke="#9a8ac0" stroke-width="0.500"/><path d="M3 7.500Q7 5.500 10.500 6.500" stroke="#cfe4ee" stroke-width="0.600" fill="none"/><g fill="#d6d6d6"><rect x="13" y="4.300" width="4" height="1.300"/><rect x="13" y="7.200" width="4" height="1.300"/><rect x="13" y="10.300" width="4" height="1.300"/><rect x="13" y="14.300" width="4" height="1.300"/></g><rect x="18.800" y="4" width="1.200" height="7" fill="url(#gcon)"/><rect x="17" y="1" width="1.500" height="0.800" fill="#5a80c8"/><rect x="19.500" y="1" width="1.500" height="0.800" fill="#5a80c8"/></svg>
<div style="left:118px;top:1016px;width:6px;height:3px;background:#9a9a9a;border-radius:1.500px;"></div>
<div style="left:162px;top:1016px;width:6px;height:3px;background:#9a9a9a;border-radius:1.500px;"></div>
<div style="left:201px;top:1016px;width:16px;height:3px;background:#4cc2ff;border-radius:1.500px;"></div>
<svg style="left:1072px;top:995px;" width="14" height="9" viewBox="0 0 14 9"><path d="M1 8L7 2L13 8" fill="none" stroke="#fff" stroke-width="1.300"/></svg>
<span class="t" id="t38" style="left:1103px;top:986px;font:400 12px/16px 'Liberation Sans', sans-serif;color:#fff;letter-spacing:-0.480px;transform:scaleX(0.8241);transform-origin:left center;">ESP</span>
<span class="t" id="t39" style="left:1107px;top:1002px;font:400 12px/16px 'Liberation Sans', sans-serif;color:#fff;letter-spacing:-0.641px;transform:scaleX(0.7805);transform-origin:left center;">ES</span>
<svg style="left:1142px;top:991px;" width="18" height="18" viewBox="0 0 18 18"><g fill="none" stroke="#fff" stroke-width="1.200"><path d="M12 3.500H2.500a1 1 0 0 0 -1 1v7a1 1 0 0 0 1 1h10.500"/><path d="M5 15.500h6M8 12.500v3"/><rect x="12.700" y="1.200" width="3.600" height="4.800" rx="0.800"/><path d="M14.500 6v9.500"/></g></svg>
<svg style="left:1168px;top:993px;" width="16" height="16" viewBox="0 0 16 16"><g fill="none" stroke="#fff" stroke-width="1.200"><path d="M1.500 5.500h2.500l3.500 -3.500v8"/><path d="M1.500 5.500v4h2"/></g><circle cx="10" cy="10.500" r="4.300" fill="#fff"/><path d="M8.300 8.800l3.400 3.400M11.700 8.800l-3.400 3.400" stroke="#13272a" stroke-width="1.100"/></svg>
<span class="t" id="t40" style="left:1237px;top:985px;font:400 12px/16px 'Liberation Sans', sans-serif;color:#fff;letter-spacing:-0.291px;transform:scaleX(0.8222);transform-origin:left center;">11:10</span>
<span class="t" id="t41" style="left:1199px;top:1001px;font:400 12px/16px 'Liberation Sans', sans-serif;color:#fff;letter-spacing:0.104px;">09/02/2026</span>
<!-- console window -->
<div style="left:586px;top:191px;width:493px;height:230px;border-radius:8px;background:#0c0c0c;overflow:hidden;box-shadow:0 0 0 1px rgba(0,0,0,0.28),0 16px 44px 2px rgba(0,0,0,0.55),0 2px 12px rgba(0,0,0,0.3);">
<div style="left:0;top:0;width:493px;height:30px;background:#000"></div>
<div style="left:476px;top:30px;width:17px;height:200px;background:#171717"></div>
<div style="left:484px;top:47px;width:2px;height:17px;background:#9d9d9d;border-radius:1px"></div>
<svg style="left:8px;top:8px" width="15" height="12" viewBox="0 0 15 12"><defs><linearGradient id="gci" x1="0" y1="0" x2="0.500" y2="1"><stop offset="0" stop-color="#5a86c8"/><stop offset="1" stop-color="#48a848"/></linearGradient></defs><rect width="15" height="12" fill="#f2f2f2"/><rect x="2" y="2" width="5" height="8" fill="url(#gci)"/><rect x="9" y="2" width="2" height="8" fill="#dedede"/><rect x="12" y="2" width="2" height="4" fill="url(#gci)"/></svg>
<svg style="left:360px;top:0" width="133" height="30" viewBox="0 0 133 30"><g fill="none" stroke="#fff" stroke-width="1"><path d="M14 14.500h10"/><rect x="59.500" y="9.500" width="9" height="9" rx="1"/><path d="M105.500 9.500l9.500 9.500M115 9.500l-9.500 9.500"/></g></svg>
</div>
<span class="t" id="t42" style="left:615px;top:198px;font:400 12px/16px 'Liberation Sans', sans-serif;color:#fff;letter-spacing:-0.022px;">C:\Users\GNet\Desktop\Untitled1.exe</span>
<pre id="con" style="left:586px;top:223px;font:13.6px/16px 'Liberation Mono', monospace;letter-spacing:-0.16px;color:#cccccc;">ingrese la primera nota97
ingrese la segunda nota67
ingrese la tercera nota86
ingrese la cuarta nota57
el promedio final es:
--------------------------------
Process exited after 8.852 seconds with return value 0
Presione una tecla para continuar . . . </pre>
<div style="left:906px;top:345px;width:8px;height:3px;background:#e6e6e6;"></div>
</body></html>
